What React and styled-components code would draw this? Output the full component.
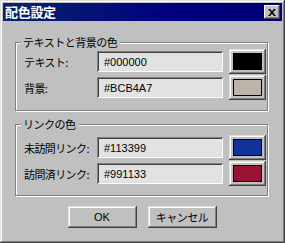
import React, { useState } from 'react';
import styled, { createGlobalStyle } from 'styled-components';

const GlobalStyle = createGlobalStyle`
    html, body {
        margin: 0;
        padding: 0;
        background: #c0c0c0;
    }
    * {
        box-sizing: border-box;
    }
`

const Window = styled.div`
    width: 285px;
    height: 243px;
    padding: 3px;
    background: #c0c0c0;
    box-shadow: inset -1px -1px 0 #404040, inset 1px 1px 0 #dfdfdf,
        inset -2px -2px 0 #808080, inset 2px 2px 0 #ffffff;
    display: flex;
    flex-direction: column;
    font-family: "Noto Sans CJK JP", "Liberation Sans", sans-serif;
`

const TitleBar = styled.div`
    height: 18px;
    display: flex;
    align-items: center;
    justify-content: space-between;
    padding: 0 2px 0 2px;
    background: linear-gradient(to right, #0a246a, #000080 60%, #000078);
`

const Title = styled.span`
    color: #ffffff;
    font-weight: bold;
    font-size: 13px;
    line-height: 18px;
    letter-spacing: -0.3px;
`

const CloseButton = styled.button`
    width: 16px;
    height: 14px;
    padding: 0;
    border: none;
    background: #c0c0c0;
    box-shadow: inset -1px -1px 0 #404040, inset 1px 1px 0 #ffffff,
        inset -2px -2px 0 #808080;
    display: flex;
    align-items: center;
    justify-content: center;
`

const Content = styled.div`
    display: flex;
    flex-direction: column;
    padding: 21px 14px 0 12px;
`

const Group = styled.div`
    position: relative;
    border: 1px solid #808080;
    box-shadow: 1px 1px 0 #ffffff, inset 1px 1px 0 #ffffff;
    padding: ${p => p.$top}px 0 ${p => p.$bottom}px 8px;
    margin-top: ${p => p.$gap || 0}px;
    display: flex;
    flex-direction: column;
    gap: 1px;
`

const Legend = styled.span`
    position: absolute;
    top: -7px;
    left: 5px;
    padding: 0 3px 0 2px;
    background: #c0c0c0;
    font-size: 11px;
    line-height: 13px;
    letter-spacing: -0.5px;
    color: #000;
`

const Row = styled.div`
    height: 25px;
    display: flex;
    align-items: center;
`

const Label = styled.span`
    width: 73px;
    font-size: 11px;
    letter-spacing: -0.6px;
    color: #000;
`

const Field = styled.input`
    width: 126px;
    height: 21px;
    margin: 0 6px 0 0;
    padding: 0 4px 0 7px;
    border: none;
    outline: none;
    background: #e2e2e2;
    box-shadow: inset 1px 1px 0 #808080, inset -1px -1px 0 #ffffff,
        inset 2px 2px 0 #404040, inset -2px -2px 0 #dfdfdf;
    font-family: "Liberation Sans", sans-serif;
    font-size: 11px;
    color: #000;
`

const ColorButton = styled.button`
    width: 37px;
    height: 25px;
    padding: 4px;
    border: none;
    background: #c0c0c0;
    box-shadow: inset -1px -1px 0 #404040, inset 1px 1px 0 #dfdfdf,
        inset -2px -2px 0 #808080, inset 2px 2px 0 #ffffff;
    display: flex;
`

const Swatch = styled.span`
    flex: 1;
    border: 1px solid #000;
    background: ${p => p.$color};
`

const Footer = styled.div`
    display: flex;
    justify-content: center;
    gap: 11px;
    margin-top: 10px;
    padding-left: 1px;
`

const PushButton = styled.button`
    width: 69px;
    height: 22px;
    padding: 0;
    border: none;
    background: #c0c0c0;
    box-shadow: inset -1px -1px 0 #404040, inset 1px 1px 0 #dfdfdf,
        inset -2px -2px 0 #808080, inset 2px 2px 0 #ffffff;
    font-family: "Liberation Sans", "Noto Sans CJK JP", sans-serif;
    font-size: 11px;
    letter-spacing: ${p => p.$tight ? '-0.5px' : '0'};
    color: #000;
`

const groups = [
    {
        title: 'テキストと背景の色',
        top: 6,
        bottom: 10,
        gap: 0,
        rows: [
            { label: 'テキスト:', value: '#000000' },
            { label: '背景:', value: '#BCB4A7' },
        ],
    },
    {
        title: 'リンクの色',
        top: 10,
        bottom: 9,
        gap: 13,
        rows: [
            { label: '未訪問リンク:', value: '#113399' },
            { label: '訪問済リンク:', value: '#991133' },
        ],
    },
]

export default function App() {
    const [colors, setColors] = useState(() => {
        const start = {};
        groups.forEach(g => g.rows.forEach(r => { start[r.label] = r.value; }));
        return start;
    });

    return (
        <>
        <GlobalStyle />
        <Window>
            <TitleBar>
                <Title>配色設定</Title>
                <CloseButton aria-label="close">
                    <svg width="8" height="7" viewBox="0 0 8 7">
                        <path d="M0 0h2l2 2.2L6 0h2L5 3.5 8 7H6L4 4.8 2 7H0l3-3.5z" fill="#000" />
                    </svg>
                </CloseButton>
            </TitleBar>
            <Content>
                {groups.map(g => (
                    <Group key={g.title} $top={g.top} $bottom={g.bottom} $gap={g.gap}>
                        <Legend>{g.title}</Legend>
                        {g.rows.map(r => (
                            <Row key={r.label}>
                                <Label>{r.label}</Label>
                                <Field
                                    value={colors[r.label]}
                                    onChange={(e) => setColors({ ...colors, [r.label]: e.target.value })} />
                                <ColorButton>
                                    <Swatch $color={colors[r.label]} />
                                </ColorButton>
                            </Row>
                        ))}
                    </Group>
                ))}
                <Footer>
                    <PushButton>OK</PushButton>
                    <PushButton $tight>キャンセル</PushButton>
                </Footer>
            </Content>
        </Window>
        </>
    )
}
